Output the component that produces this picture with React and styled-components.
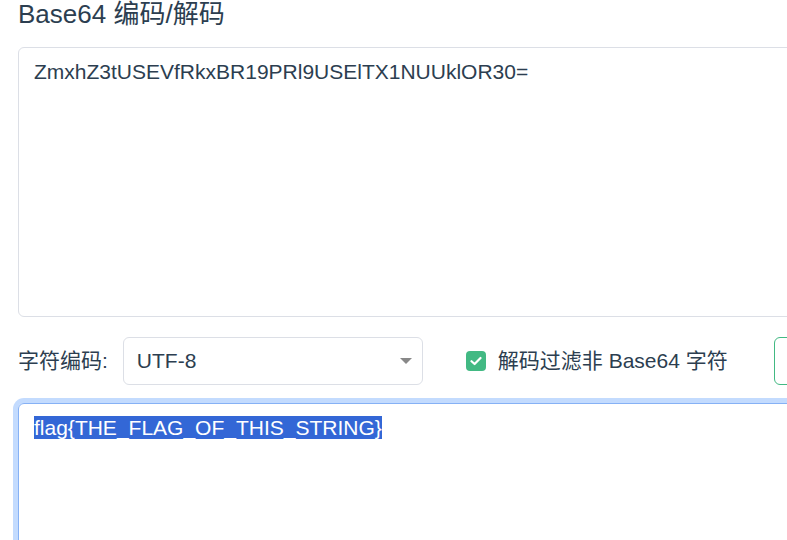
import React from 'react'
import styled, { createGlobalStyle } from 'styled-components'

const Global = createGlobalStyle`
html, body {
    margin: 0;
    padding: 0;
    background: #fff;
    overflow: hidden;
}
body {
    font-family: "Liberation Sans", Arial, "Noto Sans CJK SC", sans-serif;
    color: #2c3e50;
}
`

const Page = styled.div`
width: 1100px;
padding-left: 18px;
`

const Title = styled.h2`
margin: 0;
font-size: 26px;
line-height: 28px;
font-weight: normal;
color: #2c3e50;
`

const Area = styled.div`
box-sizing: border-box;
width: 1000px;
height: ${(p) => p.h}px;
margin-top: ${(p) => p.mt}px;
padding: 8px 15px;
border: 1px solid ${(p) => (p.focused ? '#86b1f5' : '#dcdfe6')};
border-radius: 6px;
box-shadow: ${(p) => (p.focused ? '0 0 0 5px #c3dbfe' : 'none')};
font-size: 21px;
line-height: 31.5px;
color: #2c3e50;
white-space: pre-wrap;
`

const Selected = styled.span`
background: #3367d6;
color: #fff;
`

const Row = styled.div`
display: flex;
align-items: center;
height: 48px;
margin-top: 20px;
font-size: 21px;
line-height: 24px;
`

const Label = styled.span`
margin-right: 15px;
`

const Select = styled.div`
box-sizing: border-box;
width: 300px;
height: 48px;
display: flex;
align-items: center;
justify-content: space-between;
padding: 0 10px 0 13px;
border: 1px solid #dcdfe6;
border-radius: 6px;
`

const Arrow = styled.span`
width: 0;
height: 0;
border-left: 6px solid transparent;
border-right: 6px solid transparent;
border-top: 6px solid #888;
`

const Check = styled.span`
width: 20px;
height: 20px;
margin-left: 43px;
margin-right: 12px;
border-radius: 4px;
background: #42b983;
display: flex;
align-items: center;
justify-content: center;
`

const Button = styled.button`
box-sizing: border-box;
height: 48px;
width: 120px;
margin-left: 46px;
border: 1px solid #42b983;
border-radius: 6px;
background: #fff;
`

export default function App() {
    return (
        <Page>
            <Global />
            <Title>Base64 编码/解码</Title>
            <Area h={270} mt={19}>ZmxhZ3tUSEVfRkxBR19PRl9USElTX1NUUklOR30=</Area>
            <Row>
                <Label>字符编码:</Label>
                <Select>
                    <span>UTF-8</span>
                    <Arrow />
                </Select>
                <Check>
                    <svg width="12" height="10" viewBox="0 0 12 10">
                        <path d="M1.5 5.2 L4.6 8 L10.5 2" fill="none" stroke="#fff" strokeWidth="2.2" strokeLinecap="round" strokeLinejoin="round" />
                    </svg>
                </Check>
                <span>解码过滤非 Base64 字符</span>
                <Button />
            </Row>
            <Area h={270} mt={18} focused>
                <Selected>flag{'{'}THE_FLAG_OF_THIS_STRING{'}'}</Selected>
            </Area>
        </Page>
    )
}
